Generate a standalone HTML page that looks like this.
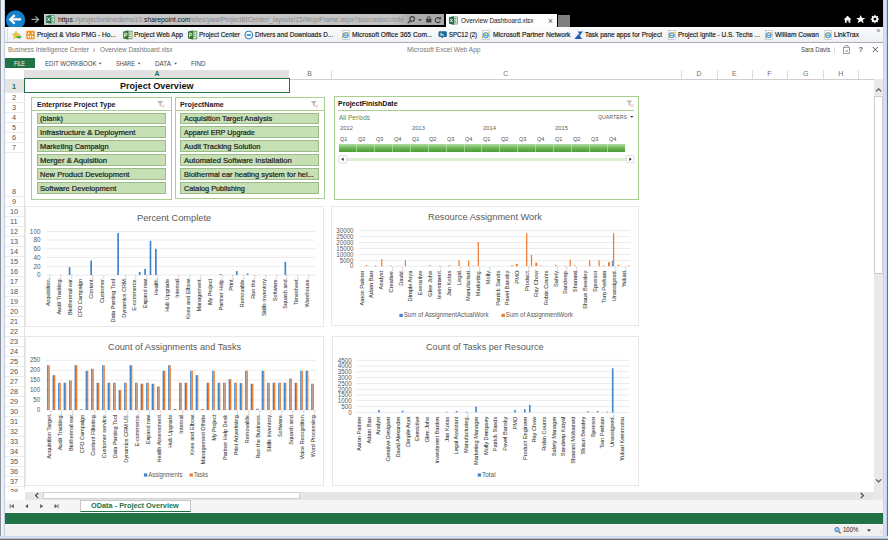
<!DOCTYPE html>
<html lang="en"><head><meta charset="utf-8"><title>Overview Dashboard.xlsx</title>
<style>
html,body{margin:0;padding:0;}
body{width:888px;height:540px;overflow:hidden;position:relative;background:#fff;font-family:"Liberation Sans",sans-serif;}
.b{position:absolute;box-sizing:border-box;}
.t{position:absolute;white-space:nowrap;transform-origin:0 50%;}
svg{position:absolute;left:0;top:0;overflow:visible;}
svg text{font-family:"Liberation Sans",sans-serif;}
</style></head><body>
<div class="b" style="left:0.00px;top:0.00px;width:888.00px;height:540.00px;background:#c9d9ec;"></div>
<div class="b" style="left:0.00px;top:0.00px;width:4.60px;height:540.00px;background:linear-gradient(90deg,#8f9196 0,#8f9196 15%,#eef3fa 22%,#e9eff8 72%,#bfcde2 80%,#bfcde2 100%);"></div>
<div class="b" style="left:883.40px;top:0.00px;width:4.60px;height:540.00px;background:linear-gradient(90deg,#bccbe2 0,#d6e2f3 22%,#d3e0f2 62%,#c0cfe6 72%,#757779 80%,#6e6e6e 100%);"></div>
<div class="b" style="left:0.00px;top:536.00px;width:888.00px;height:4.00px;background:linear-gradient(180deg,#c3d2e8 0,#d6e2f3 25%,#d3e0f2 58%,#9aa3b0 66%,#6e6e6e 74%,#6e6e6e 100%);"></div>
<div class="b" style="left:4.60px;top:0.00px;width:878.80px;height:27.10px;background:#000;"></div>
<svg width="888" height="30" viewBox="0 0 888 30"><circle cx="15.55" cy="19.9" r="9.6" fill="#1581cb"/><path d="M21.1 19.45H10.6M14.7 15.1L10.3 19.45L14.7 23.8" fill="none" stroke="#fff" stroke-width="2.2" stroke-linecap="butt" stroke-linejoin="miter"/><path d="M31.5 19.45H38.3M35.4 16.4L38.5 19.45L35.4 22.5" fill="none" stroke="#a2a2a2" stroke-width="1.3"/></svg>
<div class="b" style="left:44.00px;top:13.90px;width:399.50px;height:11.00px;background:linear-gradient(90deg,#c6c6c6 0,#c2c2c2 88%,#adadad 91%,#a9a9a9 100%);"></div>
<svg width="888" height="540" viewBox="0 0 888 540"><g transform="translate(46.20,15.10) scale(0.840)"><rect x="3.5" y="0.8" width="6.5" height="8.4" fill="#fff" stroke="#2a7a4b" stroke-width="0.7"/><path d="M5.5 2.5H9M5.5 4.2H9M5.5 5.9H9M5.5 7.6H9" stroke="#2a7a4b" stroke-width="0.8"/><path d="M0 1L6 0V10L0 9Z" fill="#1e7145"/><path d="M1.5 3L4.3 7M4.3 3L1.5 7" stroke="#fff" stroke-width="1.1" fill="none"/></g></svg>
<span class="t" style="left:57.60px;top:15.24px;font-size:7.60px;line-height:9.12px;color:#111;transform:scaleX(0.8982);">https</span>
<span class="t" style="left:72.60px;top:15.24px;font-size:7.60px;line-height:9.12px;color:#878787;transform:scaleX(0.8974);">://projectonlinedemo10.</span>
<span class="t" style="left:143.50px;top:15.24px;font-size:7.60px;line-height:9.12px;color:#111;transform:scaleX(0.8949);">sharepoint.com</span>
<span class="t" style="left:190.00px;top:15.24px;font-size:7.60px;line-height:9.12px;color:#8a8a8a;transform:scaleX(0.8642);">/sites/pwa/ProjectBICenter/_layouts/15/WopiFrame.aspx?sourcedoc=/site</span>
<svg width="888" height="30" viewBox="0 0 888 30"><circle cx="412.2" cy="18.9" r="2.3" fill="none" stroke="#3e3e3e" stroke-width="1.1"/><path d="M410.6 20.7L407.8 23" stroke="#3e3e3e" stroke-width="1.3"/><path d="M418 19.2L419.9 21.2L421.8 19.2Z" fill="#3e3e3e"/><rect x="426.2" y="18.9" width="5.2" height="3.6" fill="#3e3e3e"/><path d="M427.4 19.2V18.1A1.4 1.5 0 0 1 430.2 18.1V19.2" fill="none" stroke="#3e3e3e" stroke-width="0.9"/><path d="M439.8 18.6A2.5 2.5 0 1 0 440.2 20.9" fill="none" stroke="#3e3e3e" stroke-width="1.1"/><path d="M441 16.6V19.2H438.4Z" fill="#3e3e3e"/><path d="M843.7 19.6L847.6 15.8L851.5 19.6H850.3V22.8H848.6V20.6H846.6V22.8H844.9V19.6Z" fill="#fff"/><path d="M860.7 14.9L862 18H865.3L862.7 20L863.7 23.2L860.7 21.3L857.7 23.2L858.7 20L856.1 18H859.4Z" fill="#fff"/><circle cx="874.9" cy="19.1" r="2.4" fill="none" stroke="#fff" stroke-width="1.5"/><path d="M874.9 15V23.2M870.8 19.1H879M872 16.2L877.8 22M877.8 16.2L872 22" stroke="#fff" stroke-width="1.2"/><circle cx="874.9" cy="19.1" r="1.35" fill="#000"/></svg>
<div class="b" style="left:446.30px;top:14.00px;width:111.00px;height:14.00px;background:#fdfdfd;"></div>
<svg width="888" height="540" viewBox="0 0 888 540"><g transform="translate(449.00,16.30) scale(0.840)"><rect x="3.5" y="0.8" width="6.5" height="8.4" fill="#fff" stroke="#2a7a4b" stroke-width="0.7"/><path d="M5.5 2.5H9M5.5 4.2H9M5.5 5.9H9M5.5 7.6H9" stroke="#2a7a4b" stroke-width="0.8"/><path d="M0 1L6 0V10L0 9Z" fill="#1e7145"/><path d="M1.5 3L4.3 7M4.3 3L1.5 7" stroke="#fff" stroke-width="1.1" fill="none"/></g></svg>
<span class="t" style="left:460.50px;top:16.82px;font-size:7.30px;line-height:8.76px;color:#222;transform:scaleX(0.8760);">Overview Dashboard.xlsx</span>
<span class="t" style="left:548.00px;top:15.90px;font-size:8.50px;line-height:10.20px;color:#555;">×</span>
<div class="b" style="left:558.30px;top:14.50px;width:11.50px;height:12.50px;background:#808080;"></div>
<div class="b" style="left:4.60px;top:27.10px;width:878.80px;height:15.80px;background:linear-gradient(180deg,#fbfcfd,#eef0f3);border-bottom:1px solid #a9adb3;"></div>
<svg width="888" height="45" viewBox="0 0 888 45"><path d="M7.5 28.6V41" stroke="#9aa0a8" stroke-width="0.7" stroke-dasharray="0.7 0.9"/><path d="M16.1 31.2L17.2 33.7L19.9 34L17.9 35.8L18.5 38.5L16.1 37.1L13.7 38.5L14.3 35.8L12.3 34L15 33.7Z" fill="#f3c53a" stroke="#d2a228" stroke-width="0.5"/><path d="M16.4 36.3H19.3V35.1L21.7 37.1L19.3 39.1V37.9H16.4Z" fill="#3fae3f"/><rect x="26.3" y="30.8" width="8.4" height="8.4" rx="1" fill="#f7941d"/><path d="M28.6 32.6V34.2M32.4 32.6V34.2M28.4 36V37.8M30.5 35.6V37.8M32.6 36V37.8" stroke="#fff" stroke-width="1.2"/></svg>
<span class="t" style="left:37.00px;top:30.62px;font-size:7.30px;line-height:8.76px;color:#111;transform:scaleX(0.8988);-webkit-text-stroke:0.15px #111;">Project &amp; Visio PMG - Ho...</span>
<svg width="888" height="45" viewBox="0 0 888 45"><g transform="translate(123.20,30.6)"><rect x="3" y="0.6" width="5.8" height="7.6" fill="#fff" stroke="#31752f" stroke-width="0.7"/><path d="M4.6 2.4H7.6M4.6 4.2H7.6M4.6 6H7.6" stroke="#31752f" stroke-width="0.8"/><path d="M0 0.9L5.2 0V8.8L0 7.9Z" fill="#31752f"/><path d="M1.6 6.6V2.6H2.8A1.1 1.1 0 0 1 2.8 4.8H1.6" stroke="#fff" stroke-width="0.9" fill="none"/></g></svg>
<span class="t" style="left:134.00px;top:30.62px;font-size:7.30px;line-height:8.76px;color:#111;transform:scaleX(0.9034);-webkit-text-stroke:0.15px #111;">Project Web App</span>
<svg width="888" height="45" viewBox="0 0 888 45"><g transform="translate(188.00,30.6)"><rect x="3" y="0.6" width="5.8" height="7.6" fill="#fff" stroke="#31752f" stroke-width="0.7"/><path d="M4.6 2.4H7.6M4.6 4.2H7.6M4.6 6H7.6" stroke="#31752f" stroke-width="0.8"/><path d="M0 0.9L5.2 0V8.8L0 7.9Z" fill="#31752f"/><path d="M1.6 6.6V2.6H2.8A1.1 1.1 0 0 1 2.8 4.8H1.6" stroke="#fff" stroke-width="0.9" fill="none"/></g></svg>
<span class="t" style="left:199.00px;top:30.62px;font-size:7.30px;line-height:8.76px;color:#111;transform:scaleX(0.8787);-webkit-text-stroke:0.15px #111;">Project Center</span>
<svg width="888" height="45" viewBox="0 0 888 45"><circle cx="248.8" cy="35" r="3.9" fill="#fff" stroke="#1b7ac2" stroke-width="1"/><path d="M246.6 35H251" stroke="#1b7ac2" stroke-width="1.4"/></svg>
<span class="t" style="left:255.00px;top:30.62px;font-size:7.30px;line-height:8.76px;color:#111;transform:scaleX(0.8803);-webkit-text-stroke:0.15px #111;">Drivers and Downloads  D...</span>
<svg width="888" height="45" viewBox="0 0 888 45"><g transform="translate(341.30,30.4)"><rect x="1.2" y="0.3" width="6.8" height="8.6" fill="#fff" stroke="#b8b8b8" stroke-width="0.6"/><circle cx="4.4" cy="4.9" r="2.5" fill="#d8ecfb" stroke="#3a96e0" stroke-width="1.1"/><path d="M2.2 5H6.6" stroke="#3a96e0" stroke-width="0.9"/><path d="M0.8 7.6C1.6 4.6 5.4 1.9 7.8 2.3" stroke="#f0b429" stroke-width="0.9" fill="none"/></g></svg>
<span class="t" style="left:352.00px;top:30.62px;font-size:7.30px;line-height:8.76px;color:#111;transform:scaleX(0.9116);-webkit-text-stroke:0.15px #111;">Microsoft Office 365 Com...</span>
<svg width="888" height="45" viewBox="0 0 888 45"><path d="M439.8 31.2H445.6Q446.9 31.2 446.9 32.5V35.8Q446.9 37.1 445.6 37.1H443.2L441.6 38.7V37.1H439.8Q438.5 37.1 438.5 35.8V32.5Q438.5 31.2 439.8 31.2Z" fill="#1f6a9a"/><path d="M441 32.8V36M441 34.6H443.2V36" stroke="#fff" stroke-width="0.8" fill="none"/></svg>
<span class="t" style="left:449.00px;top:30.62px;font-size:7.30px;line-height:8.76px;color:#111;transform:scaleX(0.8216);-webkit-text-stroke:0.15px #111;">SPC12 (2)</span>
<svg width="888" height="45" viewBox="0 0 888 45"><g transform="translate(481.40,30.4)"><rect x="1.2" y="0.3" width="6.8" height="8.6" fill="#fff" stroke="#b8b8b8" stroke-width="0.6"/><circle cx="4.4" cy="4.9" r="2.5" fill="#d8ecfb" stroke="#3a96e0" stroke-width="1.1"/><path d="M2.2 5H6.6" stroke="#3a96e0" stroke-width="0.9"/><path d="M0.8 7.6C1.6 4.6 5.4 1.9 7.8 2.3" stroke="#f0b429" stroke-width="0.9" fill="none"/></g></svg>
<span class="t" style="left:492.50px;top:30.62px;font-size:7.30px;line-height:8.76px;color:#111;transform:scaleX(0.9185);-webkit-text-stroke:0.15px #111;">Microsoft Partner Network</span>
<svg width="888" height="45" viewBox="0 0 888 45"><path d="M577.4 31.4H583.2L580.2 34.6Z" fill="#1f5fbf"/><path d="M574.4 39H582.2L579.6 35.4H577.2Z" fill="#1f5fbf"/><path d="M580.6 33.4L577.6 36.6" stroke="#1f5fbf" stroke-width="1.6"/></svg>
<span class="t" style="left:585.30px;top:30.62px;font-size:7.30px;line-height:8.76px;color:#111;transform:scaleX(0.8909);-webkit-text-stroke:0.15px #111;">Task pane apps for Project</span>
<svg width="888" height="45" viewBox="0 0 888 45"><g transform="translate(667.30,30.4)"><rect x="1.2" y="0.3" width="6.8" height="8.6" fill="#fff" stroke="#b8b8b8" stroke-width="0.6"/><circle cx="4.4" cy="4.9" r="2.5" fill="#d8ecfb" stroke="#3a96e0" stroke-width="1.1"/><path d="M2.2 5H6.6" stroke="#3a96e0" stroke-width="0.9"/><path d="M0.8 7.6C1.6 4.6 5.4 1.9 7.8 2.3" stroke="#f0b429" stroke-width="0.9" fill="none"/></g></svg>
<span class="t" style="left:678.00px;top:30.62px;font-size:7.30px;line-height:8.76px;color:#111;transform:scaleX(0.8877);-webkit-text-stroke:0.15px #111;">Project Ignite - U.S. Techs ...</span>
<svg width="888" height="45" viewBox="0 0 888 45"><g transform="translate(764.30,30.4)"><rect x="1.2" y="0.3" width="6.8" height="8.6" fill="#fff" stroke="#b8b8b8" stroke-width="0.6"/><circle cx="4.4" cy="4.9" r="2.5" fill="#d8ecfb" stroke="#3a96e0" stroke-width="1.1"/><path d="M2.2 5H6.6" stroke="#3a96e0" stroke-width="0.9"/><path d="M0.8 7.6C1.6 4.6 5.4 1.9 7.8 2.3" stroke="#f0b429" stroke-width="0.9" fill="none"/></g></svg>
<span class="t" style="left:775.00px;top:30.62px;font-size:7.30px;line-height:8.76px;color:#111;transform:scaleX(0.9115);-webkit-text-stroke:0.15px #111;">William Cowan</span>
<svg width="888" height="45" viewBox="0 0 888 45"><g transform="translate(823.60,30.4)"><rect x="1.2" y="0.3" width="6.8" height="8.6" fill="#fff" stroke="#b8b8b8" stroke-width="0.6"/><circle cx="4.4" cy="4.9" r="2.5" fill="#d8ecfb" stroke="#3a96e0" stroke-width="1.1"/><path d="M2.2 5H6.6" stroke="#3a96e0" stroke-width="0.9"/><path d="M0.8 7.6C1.6 4.6 5.4 1.9 7.8 2.3" stroke="#f0b429" stroke-width="0.9" fill="none"/></g></svg>
<span class="t" style="left:834.00px;top:30.62px;font-size:7.30px;line-height:8.76px;color:#111;transform:scaleX(0.9018);-webkit-text-stroke:0.15px #111;">LinkTrax</span>
<span class="t" style="left:876.60px;top:26.70px;font-size:6.50px;line-height:7.80px;color:#4a55a8;">»</span>
<div class="b" style="left:4.60px;top:42.90px;width:878.80px;height:481.40px;background:#fff;"></div>
<span class="t" style="left:8.00px;top:46.34px;font-size:7.10px;line-height:8.52px;color:#747474;transform:scaleX(0.9001);">Business Intelligence Center</span>
<svg width="888" height="60" viewBox="0 0 888 60"><path d="M93 48.4L95 50.2L93 52" fill="none" stroke="#888" stroke-width="0.8"/></svg>
<span class="t" style="left:99.50px;top:46.34px;font-size:7.10px;line-height:8.52px;color:#747474;transform:scaleX(0.9007);">Overview Dashboard.xlsx</span>
<span class="t" style="left:407.40px;top:46.34px;font-size:7.10px;line-height:8.52px;color:#777;transform:scaleX(0.9341);">Microsoft Excel Web App</span>
<span class="t" style="left:800.60px;top:46.34px;font-size:7.10px;line-height:8.52px;color:#444;transform:scaleX(0.8467);">Sara Davis</span>
<div class="b" style="left:834.10px;top:46.60px;width:0.80px;height:6.40px;background:#d6d6d6;"></div>
<svg width="888" height="60" viewBox="0 0 888 60"><rect x="843.5" y="47.4" width="6" height="6" fill="none" stroke="#8a8a8a" stroke-width="0.8"/><rect x="845" y="45.6" width="3" height="2" fill="#fff" stroke="#8a8a8a" stroke-width="0.7"/><path d="M845.2 50.7L846.3 51.9L848 49.7" stroke="#2a9a5a" stroke-width="0.8" fill="none"/><path d="M872.8 47L877.8 52M877.8 47L872.8 52" stroke="#555" stroke-width="1"/></svg>
<span class="t" style="left:858.50px;top:45.24px;font-size:7.60px;line-height:9.12px;color:#666;font-weight:bold;">?</span>
<div class="b" style="left:4.50px;top:57.60px;width:30.40px;height:10.80px;background:#217346;"></div>
<span class="t" style="left:14.00px;top:59.52px;font-size:6.80px;line-height:8.16px;color:#fff;transform:scaleX(0.7660);">FILE</span>
<span class="t" style="left:44.50px;top:59.52px;font-size:6.80px;line-height:8.16px;color:#444;transform:scaleX(0.8870);">EDIT WORKBOOK</span>
<span class="t" style="left:116.00px;top:59.52px;font-size:6.80px;line-height:8.16px;color:#444;transform:scaleX(0.8110);">SHARE</span>
<span class="t" style="left:155.00px;top:59.52px;font-size:6.80px;line-height:8.16px;color:#444;transform:scaleX(0.9342);">DATA</span>
<span class="t" style="left:191.00px;top:59.52px;font-size:6.80px;line-height:8.16px;color:#444;transform:scaleX(0.9140);">FIND</span>
<svg width="888" height="80" viewBox="0 0 888 80"><path d="M98.6 62.8H101.6L100.1 64.6ZM137.6 62.8H140.6L139.1 64.6ZM174.1 62.8H177.1L175.6 64.6Z" fill="#555"/></svg>
<div class="b" style="left:24.30px;top:70.10px;width:264.70px;height:8.40px;background:#e1e1e1;"></div>
<div class="b" style="left:4.60px;top:78.60px;width:869.40px;height:0.80px;background:#cfcfcf;"></div>
<div class="b" style="left:331.00px;top:70.20px;width:0.70px;height:8.40px;background:#dcdcdc;"></div>
<div class="b" style="left:681.30px;top:70.20px;width:0.70px;height:8.40px;background:#dcdcdc;"></div>
<div class="b" style="left:716.80px;top:70.20px;width:0.70px;height:8.40px;background:#dcdcdc;"></div>
<div class="b" style="left:752.30px;top:70.20px;width:0.70px;height:8.40px;background:#dcdcdc;"></div>
<div class="b" style="left:787.40px;top:70.20px;width:0.70px;height:8.40px;background:#dcdcdc;"></div>
<div class="b" style="left:822.70px;top:70.20px;width:0.70px;height:8.40px;background:#dcdcdc;"></div>
<div class="b" style="left:858.40px;top:70.20px;width:0.70px;height:8.40px;background:#dcdcdc;"></div>
<span class="t" style="left:154.50px;top:70.30px;font-size:7.00px;line-height:8.40px;color:#217346;font-weight:bold;">A</span>
<span class="t" style="left:307.20px;top:70.30px;font-size:7.00px;line-height:8.40px;color:#707070;">B</span>
<span class="t" style="left:503.20px;top:70.30px;font-size:7.00px;line-height:8.40px;color:#707070;">C</span>
<span class="t" style="left:696.50px;top:70.30px;font-size:7.00px;line-height:8.40px;color:#707070;">D</span>
<span class="t" style="left:731.90px;top:70.30px;font-size:7.00px;line-height:8.40px;color:#707070;">E</span>
<span class="t" style="left:767.30px;top:70.30px;font-size:7.00px;line-height:8.40px;color:#707070;">F</span>
<span class="t" style="left:802.90px;top:70.30px;font-size:7.00px;line-height:8.40px;color:#707070;">G</span>
<span class="t" style="left:838.30px;top:70.30px;font-size:7.00px;line-height:8.40px;color:#707070;">H</span>
<div class="b" style="left:24.00px;top:79.00px;width:0.70px;height:410.00px;background:#e2e2e2;"></div>
<div class="b" style="left:4.60px;top:79.20px;width:19.50px;height:12.80px;background:#e4e4e4;"></div>
<span class="t" style="left:12.17px;top:82.43px;font-size:7.70px;line-height:9.24px;color:#217346;font-weight:bold;transform:scaleX(0.9500);">1</span>
<span class="t" style="left:12.17px;top:93.28px;font-size:7.70px;line-height:9.24px;color:#555;transform:scaleX(0.9500);">2</span>
<span class="t" style="left:12.17px;top:103.28px;font-size:7.70px;line-height:9.24px;color:#555;transform:scaleX(0.9500);">3</span>
<span class="t" style="left:12.17px;top:113.28px;font-size:7.70px;line-height:9.24px;color:#555;transform:scaleX(0.9500);">4</span>
<span class="t" style="left:12.17px;top:123.28px;font-size:7.70px;line-height:9.24px;color:#555;transform:scaleX(0.9500);">5</span>
<span class="t" style="left:12.17px;top:133.28px;font-size:7.70px;line-height:9.24px;color:#555;transform:scaleX(0.9500);">6</span>
<span class="t" style="left:12.17px;top:143.28px;font-size:7.70px;line-height:9.24px;color:#555;transform:scaleX(0.9500);">7</span>
<span class="t" style="left:12.17px;top:187.18px;font-size:7.70px;line-height:9.24px;color:#555;transform:scaleX(0.9500);">8</span>
<span class="t" style="left:12.17px;top:197.28px;font-size:7.70px;line-height:9.24px;color:#555;transform:scaleX(0.9500);">9</span>
<span class="t" style="left:10.13px;top:207.28px;font-size:7.70px;line-height:9.24px;color:#555;transform:scaleX(0.9500);">10</span>
<span class="t" style="left:10.40px;top:217.28px;font-size:7.70px;line-height:9.24px;color:#555;transform:scaleX(0.9500);">11</span>
<span class="t" style="left:10.13px;top:227.28px;font-size:7.70px;line-height:9.24px;color:#555;transform:scaleX(0.9500);">12</span>
<span class="t" style="left:10.13px;top:237.28px;font-size:7.70px;line-height:9.24px;color:#555;transform:scaleX(0.9500);">13</span>
<span class="t" style="left:10.13px;top:247.28px;font-size:7.70px;line-height:9.24px;color:#555;transform:scaleX(0.9500);">14</span>
<span class="t" style="left:10.13px;top:257.28px;font-size:7.70px;line-height:9.24px;color:#555;transform:scaleX(0.9500);">15</span>
<span class="t" style="left:10.13px;top:267.28px;font-size:7.70px;line-height:9.24px;color:#555;transform:scaleX(0.9500);">16</span>
<span class="t" style="left:10.13px;top:277.28px;font-size:7.70px;line-height:9.24px;color:#555;transform:scaleX(0.9500);">17</span>
<span class="t" style="left:10.13px;top:287.28px;font-size:7.70px;line-height:9.24px;color:#555;transform:scaleX(0.9500);">18</span>
<span class="t" style="left:10.13px;top:297.28px;font-size:7.70px;line-height:9.24px;color:#555;transform:scaleX(0.9500);">19</span>
<span class="t" style="left:10.13px;top:307.28px;font-size:7.70px;line-height:9.24px;color:#555;transform:scaleX(0.9500);">20</span>
<span class="t" style="left:10.13px;top:317.28px;font-size:7.70px;line-height:9.24px;color:#555;transform:scaleX(0.9500);">21</span>
<span class="t" style="left:10.13px;top:327.28px;font-size:7.70px;line-height:9.24px;color:#555;transform:scaleX(0.9500);">22</span>
<span class="t" style="left:10.13px;top:337.28px;font-size:7.70px;line-height:9.24px;color:#555;transform:scaleX(0.9500);">23</span>
<span class="t" style="left:10.13px;top:347.28px;font-size:7.70px;line-height:9.24px;color:#555;transform:scaleX(0.9500);">24</span>
<span class="t" style="left:10.13px;top:357.28px;font-size:7.70px;line-height:9.24px;color:#555;transform:scaleX(0.9500);">25</span>
<span class="t" style="left:10.13px;top:367.28px;font-size:7.70px;line-height:9.24px;color:#555;transform:scaleX(0.9500);">26</span>
<span class="t" style="left:10.13px;top:377.28px;font-size:7.70px;line-height:9.24px;color:#555;transform:scaleX(0.9500);">27</span>
<span class="t" style="left:10.13px;top:387.28px;font-size:7.70px;line-height:9.24px;color:#555;transform:scaleX(0.9500);">28</span>
<span class="t" style="left:10.13px;top:397.28px;font-size:7.70px;line-height:9.24px;color:#555;transform:scaleX(0.9500);">29</span>
<span class="t" style="left:10.13px;top:407.28px;font-size:7.70px;line-height:9.24px;color:#555;transform:scaleX(0.9500);">30</span>
<span class="t" style="left:10.13px;top:417.28px;font-size:7.70px;line-height:9.24px;color:#555;transform:scaleX(0.9500);">31</span>
<span class="t" style="left:10.13px;top:427.28px;font-size:7.70px;line-height:9.24px;color:#555;transform:scaleX(0.9500);">32</span>
<span class="t" style="left:10.13px;top:437.28px;font-size:7.70px;line-height:9.24px;color:#555;transform:scaleX(0.9500);">33</span>
<span class="t" style="left:10.13px;top:447.28px;font-size:7.70px;line-height:9.24px;color:#555;transform:scaleX(0.9500);">34</span>
<span class="t" style="left:10.13px;top:457.28px;font-size:7.70px;line-height:9.24px;color:#555;transform:scaleX(0.9500);">35</span>
<span class="t" style="left:10.13px;top:467.28px;font-size:7.70px;line-height:9.24px;color:#555;transform:scaleX(0.9500);">36</span>
<span class="t" style="left:10.13px;top:477.28px;font-size:7.70px;line-height:9.24px;color:#555;transform:scaleX(0.9500);">37</span>
<div class="b" style="left:4.60px;top:92.30px;width:19.50px;height:0.70px;background:#ebebeb;"></div>
<div class="b" style="left:4.60px;top:102.00px;width:19.50px;height:0.70px;background:#ebebeb;"></div>
<div class="b" style="left:4.60px;top:112.00px;width:19.50px;height:0.70px;background:#ebebeb;"></div>
<div class="b" style="left:4.60px;top:122.00px;width:19.50px;height:0.70px;background:#ebebeb;"></div>
<div class="b" style="left:4.60px;top:132.00px;width:19.50px;height:0.70px;background:#ebebeb;"></div>
<div class="b" style="left:4.60px;top:142.00px;width:19.50px;height:0.70px;background:#ebebeb;"></div>
<div class="b" style="left:4.60px;top:152.00px;width:19.50px;height:0.70px;background:#ebebeb;"></div>
<div class="b" style="left:4.60px;top:196.20px;width:19.50px;height:0.70px;background:#ebebeb;"></div>
<div class="b" style="left:4.60px;top:206.21px;width:19.50px;height:0.70px;background:#ebebeb;"></div>
<div class="b" style="left:4.60px;top:216.22px;width:19.50px;height:0.70px;background:#ebebeb;"></div>
<div class="b" style="left:4.60px;top:226.23px;width:19.50px;height:0.70px;background:#ebebeb;"></div>
<div class="b" style="left:4.60px;top:236.24px;width:19.50px;height:0.70px;background:#ebebeb;"></div>
<div class="b" style="left:4.60px;top:246.25px;width:19.50px;height:0.70px;background:#ebebeb;"></div>
<div class="b" style="left:4.60px;top:256.26px;width:19.50px;height:0.70px;background:#ebebeb;"></div>
<div class="b" style="left:4.60px;top:266.27px;width:19.50px;height:0.70px;background:#ebebeb;"></div>
<div class="b" style="left:4.60px;top:276.28px;width:19.50px;height:0.70px;background:#ebebeb;"></div>
<div class="b" style="left:4.60px;top:286.29px;width:19.50px;height:0.70px;background:#ebebeb;"></div>
<div class="b" style="left:4.60px;top:296.30px;width:19.50px;height:0.70px;background:#ebebeb;"></div>
<div class="b" style="left:4.60px;top:306.31px;width:19.50px;height:0.70px;background:#ebebeb;"></div>
<div class="b" style="left:4.60px;top:316.32px;width:19.50px;height:0.70px;background:#ebebeb;"></div>
<div class="b" style="left:4.60px;top:326.33px;width:19.50px;height:0.70px;background:#ebebeb;"></div>
<div class="b" style="left:4.60px;top:336.34px;width:19.50px;height:0.70px;background:#ebebeb;"></div>
<div class="b" style="left:4.60px;top:346.35px;width:19.50px;height:0.70px;background:#ebebeb;"></div>
<div class="b" style="left:4.60px;top:356.36px;width:19.50px;height:0.70px;background:#ebebeb;"></div>
<div class="b" style="left:4.60px;top:366.37px;width:19.50px;height:0.70px;background:#ebebeb;"></div>
<div class="b" style="left:4.60px;top:376.38px;width:19.50px;height:0.70px;background:#ebebeb;"></div>
<div class="b" style="left:4.60px;top:386.39px;width:19.50px;height:0.70px;background:#ebebeb;"></div>
<div class="b" style="left:4.60px;top:396.40px;width:19.50px;height:0.70px;background:#ebebeb;"></div>
<div class="b" style="left:4.60px;top:406.41px;width:19.50px;height:0.70px;background:#ebebeb;"></div>
<div class="b" style="left:4.60px;top:416.42px;width:19.50px;height:0.70px;background:#ebebeb;"></div>
<div class="b" style="left:4.60px;top:426.43px;width:19.50px;height:0.70px;background:#ebebeb;"></div>
<div class="b" style="left:4.60px;top:436.44px;width:19.50px;height:0.70px;background:#ebebeb;"></div>
<div class="b" style="left:4.60px;top:446.45px;width:19.50px;height:0.70px;background:#ebebeb;"></div>
<div class="b" style="left:4.60px;top:456.46px;width:19.50px;height:0.70px;background:#ebebeb;"></div>
<div class="b" style="left:4.60px;top:466.47px;width:19.50px;height:0.70px;background:#ebebeb;"></div>
<div class="b" style="left:4.60px;top:476.48px;width:19.50px;height:0.70px;background:#ebebeb;"></div>
<div class="b" style="left:4.60px;top:486.49px;width:19.50px;height:0.70px;background:#ebebeb;"></div>
<span class="t" style="left:10.10px;top:486.78px;font-size:7.70px;line-height:9.24px;color:#555;transform:scaleX(0.9574);clip-path:inset(0 0 47% 0);">38</span>
<div class="b" style="left:24.05px;top:78.05px;width:265.60px;height:14.60px;border:1.6px solid #217346;background:#fff;"></div>
<span class="t" style="left:120.00px;top:80.72px;font-size:9.30px;line-height:11.16px;color:#111;font-weight:bold;transform:scaleX(0.9739);">Project Overview</span>
<div class="b" style="left:30.90px;top:96.80px;width:141.10px;height:103.10px;border:1.2px solid #a9cf8f;background:#fff;"></div>
<span class="t" style="left:36.50px;top:100.66px;font-size:7.40px;line-height:8.88px;color:#151a2a;font-weight:bold;transform:scaleX(0.9512);">Enterprise Project Type</span>
<div class="b" style="left:31.90px;top:109.80px;width:139.10px;height:1.10px;background:#a9cf8f;"></div>
<svg width="888" height="540" viewBox="0 0 888 540"><g transform="translate(157.10,101.10)"><path d="M0 0H6.2L3.8 2.6V5.4L2.5 4.6V2.6Z" fill="#b9b9b9"/><path d="M4.4 3.6L7 6.4M7 3.6L4.4 6.4" stroke="#f29a9a" stroke-width="0.7"/></g></svg>
<div class="b" style="left:36.50px;top:112.50px;width:129.20px;height:11.90px;background:#c6dfb5;border:0.9px solid #9cb98a;"></div>
<span class="t" style="left:40.30px;top:115.14px;font-size:7.10px;line-height:8.52px;color:#1c1c1c;transform:scaleX(1.0551);-webkit-text-stroke:0.2px #1c1c1c;">(blank)</span>
<div class="b" style="left:36.50px;top:126.46px;width:129.20px;height:11.90px;background:#c6dfb5;border:0.9px solid #9cb98a;"></div>
<span class="t" style="left:40.30px;top:129.10px;font-size:7.10px;line-height:8.52px;color:#1c1c1c;transform:scaleX(1.0804);-webkit-text-stroke:0.2px #1c1c1c;">Infrastructure &amp; Deployment</span>
<div class="b" style="left:36.50px;top:140.42px;width:129.20px;height:11.90px;background:#c6dfb5;border:0.9px solid #9cb98a;"></div>
<span class="t" style="left:40.30px;top:143.06px;font-size:7.10px;line-height:8.52px;color:#1c1c1c;transform:scaleX(1.0487);-webkit-text-stroke:0.2px #1c1c1c;">Marketing Campaign</span>
<div class="b" style="left:36.50px;top:154.38px;width:129.20px;height:11.90px;background:#c6dfb5;border:0.9px solid #9cb98a;"></div>
<span class="t" style="left:40.30px;top:157.02px;font-size:7.10px;line-height:8.52px;color:#1c1c1c;transform:scaleX(1.0899);-webkit-text-stroke:0.2px #1c1c1c;">Merger &amp; Aquisition</span>
<div class="b" style="left:36.50px;top:168.34px;width:129.20px;height:11.90px;background:#c6dfb5;border:0.9px solid #9cb98a;"></div>
<span class="t" style="left:40.30px;top:170.98px;font-size:7.10px;line-height:8.52px;color:#1c1c1c;transform:scaleX(1.0598);-webkit-text-stroke:0.2px #1c1c1c;">New Product Development</span>
<div class="b" style="left:36.50px;top:182.30px;width:129.20px;height:11.90px;background:#c6dfb5;border:0.9px solid #9cb98a;"></div>
<span class="t" style="left:40.30px;top:184.94px;font-size:7.10px;line-height:8.52px;color:#1c1c1c;transform:scaleX(1.0623);-webkit-text-stroke:0.2px #1c1c1c;">Software Development</span>
<div class="b" style="left:174.60px;top:96.80px;width:150.90px;height:102.20px;border:1.2px solid #a9cf8f;background:#fff;"></div>
<span class="t" style="left:180.20px;top:100.66px;font-size:7.40px;line-height:8.88px;color:#151a2a;font-weight:bold;transform:scaleX(0.9681);">ProjectName</span>
<div class="b" style="left:175.60px;top:109.80px;width:148.90px;height:1.10px;background:#a9cf8f;"></div>
<svg width="888" height="540" viewBox="0 0 888 540"><g transform="translate(310.60,101.10)"><path d="M0 0H6.2L3.8 2.6V5.4L2.5 4.6V2.6Z" fill="#b9b9b9"/><path d="M4.4 3.6L7 6.4M7 3.6L4.4 6.4" stroke="#f29a9a" stroke-width="0.7"/></g></svg>
<div class="b" style="left:180.20px;top:112.50px;width:139.00px;height:11.90px;background:#c6dfb5;border:0.9px solid #9cb98a;"></div>
<span class="t" style="left:184.00px;top:115.14px;font-size:7.10px;line-height:8.52px;color:#1c1c1c;transform:scaleX(1.0508);-webkit-text-stroke:0.2px #1c1c1c;">Acquisition Target Analysis</span>
<div class="b" style="left:180.20px;top:126.46px;width:139.00px;height:11.90px;background:#c6dfb5;border:0.9px solid #9cb98a;"></div>
<span class="t" style="left:184.00px;top:129.10px;font-size:7.10px;line-height:8.52px;color:#1c1c1c;transform:scaleX(1.0096);-webkit-text-stroke:0.2px #1c1c1c;">Apparel ERP Upgrade</span>
<div class="b" style="left:180.20px;top:140.42px;width:139.00px;height:11.90px;background:#c6dfb5;border:0.9px solid #9cb98a;"></div>
<span class="t" style="left:184.00px;top:143.06px;font-size:7.10px;line-height:8.52px;color:#1c1c1c;transform:scaleX(1.0548);-webkit-text-stroke:0.2px #1c1c1c;">Audit Tracking Solution</span>
<div class="b" style="left:180.20px;top:154.38px;width:139.00px;height:11.90px;background:#c6dfb5;border:0.9px solid #9cb98a;"></div>
<span class="t" style="left:184.00px;top:157.02px;font-size:7.10px;line-height:8.52px;color:#1c1c1c;transform:scaleX(1.0753);-webkit-text-stroke:0.2px #1c1c1c;">Automated Software Installation</span>
<div class="b" style="left:180.20px;top:168.34px;width:139.00px;height:11.90px;background:#c6dfb5;border:0.9px solid #9cb98a;"></div>
<span class="t" style="left:184.00px;top:170.98px;font-size:7.10px;line-height:8.52px;color:#1c1c1c;transform:scaleX(1.0525);-webkit-text-stroke:0.2px #1c1c1c;">Biothermal ear heating system for hel...</span>
<div class="b" style="left:180.20px;top:182.30px;width:139.00px;height:11.90px;background:#c6dfb5;border:0.9px solid #9cb98a;"></div>
<span class="t" style="left:184.00px;top:184.94px;font-size:7.10px;line-height:8.52px;color:#1c1c1c;transform:scaleX(1.0269);-webkit-text-stroke:0.2px #1c1c1c;">Catalog Publishing</span>
<div class="b" style="left:333.50px;top:96.30px;width:305.70px;height:103.40px;border:1.2px solid #a9cf8f;background:#fff;"></div>
<span class="t" style="left:338.40px;top:99.86px;font-size:7.40px;line-height:8.88px;color:#111;font-weight:bold;transform:scaleX(0.9473);">ProjectFinishDate</span>
<div class="b" style="left:338.00px;top:110.10px;width:296.00px;height:1.00px;background:#a9cf8f;"></div>
<svg width="888" height="540" viewBox="0 0 888 540"><g transform="translate(626.20,100.50)"><path d="M0 0H6.2L3.8 2.6V5.4L2.5 4.6V2.6Z" fill="#b9b9b9"/><path d="M4.4 3.6L7 6.4M7 3.6L4.4 6.4" stroke="#f29a9a" stroke-width="0.7"/></g></svg>
<span class="t" style="left:338.70px;top:113.58px;font-size:6.70px;line-height:8.04px;color:#5c8c42;transform:scaleX(0.9711);">All Periods</span>
<span class="t" style="left:598.00px;top:113.66px;font-size:5.90px;line-height:7.08px;color:#5a5a5a;transform:scaleX(0.8875);">QUARTERS</span>
<svg width="888" height="540" viewBox="0 0 888 540"><path d="M629.9 115.9H633.7L631.8 117.8Z" fill="#444"/></svg>
<span class="t" style="left:339.80px;top:124.08px;font-size:6.20px;line-height:7.44px;color:#606060;transform:scaleX(0.9425);">2012</span>
<span class="t" style="left:339.80px;top:134.64px;font-size:6.10px;line-height:7.32px;color:#505050;transform:scaleX(0.9094);">Q1</span>
<span class="t" style="left:357.72px;top:134.64px;font-size:6.10px;line-height:7.32px;color:#505050;transform:scaleX(0.9094);">Q2</span>
<span class="t" style="left:375.64px;top:134.64px;font-size:6.10px;line-height:7.32px;color:#505050;transform:scaleX(0.9094);">Q3</span>
<span class="t" style="left:393.56px;top:134.64px;font-size:6.10px;line-height:7.32px;color:#505050;transform:scaleX(0.9094);">Q4</span>
<span class="t" style="left:411.50px;top:124.08px;font-size:6.20px;line-height:7.44px;color:#606060;transform:scaleX(0.9425);">2013</span>
<span class="t" style="left:411.50px;top:134.64px;font-size:6.10px;line-height:7.32px;color:#505050;transform:scaleX(0.9094);">Q1</span>
<span class="t" style="left:429.42px;top:134.64px;font-size:6.10px;line-height:7.32px;color:#505050;transform:scaleX(0.9094);">Q2</span>
<span class="t" style="left:447.34px;top:134.64px;font-size:6.10px;line-height:7.32px;color:#505050;transform:scaleX(0.9094);">Q3</span>
<span class="t" style="left:465.26px;top:134.64px;font-size:6.10px;line-height:7.32px;color:#505050;transform:scaleX(0.9094);">Q4</span>
<span class="t" style="left:483.20px;top:124.08px;font-size:6.20px;line-height:7.44px;color:#606060;transform:scaleX(0.9425);">2014</span>
<span class="t" style="left:483.20px;top:134.64px;font-size:6.10px;line-height:7.32px;color:#505050;transform:scaleX(0.9094);">Q1</span>
<span class="t" style="left:501.12px;top:134.64px;font-size:6.10px;line-height:7.32px;color:#505050;transform:scaleX(0.9094);">Q2</span>
<span class="t" style="left:519.04px;top:134.64px;font-size:6.10px;line-height:7.32px;color:#505050;transform:scaleX(0.9094);">Q3</span>
<span class="t" style="left:536.96px;top:134.64px;font-size:6.10px;line-height:7.32px;color:#505050;transform:scaleX(0.9094);">Q4</span>
<span class="t" style="left:554.90px;top:124.08px;font-size:6.20px;line-height:7.44px;color:#606060;transform:scaleX(0.9425);">2015</span>
<span class="t" style="left:554.90px;top:134.64px;font-size:6.10px;line-height:7.32px;color:#505050;transform:scaleX(0.9094);">Q1</span>
<span class="t" style="left:572.82px;top:134.64px;font-size:6.10px;line-height:7.32px;color:#505050;transform:scaleX(0.9094);">Q2</span>
<span class="t" style="left:590.74px;top:134.64px;font-size:6.10px;line-height:7.32px;color:#505050;transform:scaleX(0.9094);">Q3</span>
<span class="t" style="left:608.66px;top:134.64px;font-size:6.10px;line-height:7.32px;color:#505050;transform:scaleX(0.9094);">Q4</span>
<div class="b" style="left:338.60px;top:144.20px;width:286.50px;height:7.70px;background:linear-gradient(180deg,#b4dca5 0,#8cc97a 25%,#66b04f 60%,#4b9b36 100%);"></div>
<div class="b" style="left:356.11px;top:144.20px;width:0.80px;height:7.70px;background:rgba(200,235,190,0.55);"></div>
<div class="b" style="left:374.01px;top:144.20px;width:0.80px;height:7.70px;background:rgba(200,235,190,0.55);"></div>
<div class="b" style="left:391.92px;top:144.20px;width:0.80px;height:7.70px;background:rgba(200,235,190,0.55);"></div>
<div class="b" style="left:409.82px;top:144.20px;width:0.80px;height:7.70px;background:rgba(200,235,190,0.55);"></div>
<div class="b" style="left:427.73px;top:144.20px;width:0.80px;height:7.70px;background:rgba(200,235,190,0.55);"></div>
<div class="b" style="left:445.63px;top:144.20px;width:0.80px;height:7.70px;background:rgba(200,235,190,0.55);"></div>
<div class="b" style="left:463.54px;top:144.20px;width:0.80px;height:7.70px;background:rgba(200,235,190,0.55);"></div>
<div class="b" style="left:481.44px;top:144.20px;width:0.80px;height:7.70px;background:rgba(200,235,190,0.55);"></div>
<div class="b" style="left:499.35px;top:144.20px;width:0.80px;height:7.70px;background:rgba(200,235,190,0.55);"></div>
<div class="b" style="left:517.25px;top:144.20px;width:0.80px;height:7.70px;background:rgba(200,235,190,0.55);"></div>
<div class="b" style="left:535.16px;top:144.20px;width:0.80px;height:7.70px;background:rgba(200,235,190,0.55);"></div>
<div class="b" style="left:553.06px;top:144.20px;width:0.80px;height:7.70px;background:rgba(200,235,190,0.55);"></div>
<div class="b" style="left:570.97px;top:144.20px;width:0.80px;height:7.70px;background:rgba(200,235,190,0.55);"></div>
<div class="b" style="left:588.87px;top:144.20px;width:0.80px;height:7.70px;background:rgba(200,235,190,0.55);"></div>
<div class="b" style="left:606.78px;top:144.20px;width:0.80px;height:7.70px;background:rgba(200,235,190,0.55);"></div>
<div class="b" style="left:346.50px;top:157.60px;width:280.00px;height:3.30px;background:#dcefd4;"></div>
<svg width="888" height="540" viewBox="0 0 888 540"><rect x="338.9" y="155.5" width="7.6" height="7.4" rx="1" fill="#fff" stroke="#cfcfcf" stroke-width="0.7"/><path d="M343.6 157.5V161L341.3 159.25Z" fill="#222"/><rect x="626.5" y="155.5" width="7.4" height="7.4" rx="1" fill="#fff" stroke="#cfcfcf" stroke-width="0.7"/><path d="M629.3 157.5V161L631.6 159.25Z" fill="#222"/></svg>
<div class="b" style="left:25.00px;top:206.00px;width:299.00px;height:121.00px;border:1px solid #e8e8e8;background:#fff;"></div>
<span class="t" style="left:136.80px;top:212.62px;font-size:9.30px;line-height:11.16px;color:#595959;transform:scaleX(0.9968);">Percent Complete</span>
<svg width="888" height="540" viewBox="0 0 888 540"><rect x="46.20" y="274.65" width="268.80" height="0.7" fill="#e3e3e3"/><rect x="46.20" y="265.91" width="268.80" height="0.7" fill="#e3e3e3"/><rect x="46.20" y="257.17" width="268.80" height="0.7" fill="#e3e3e3"/><rect x="46.20" y="248.43" width="268.80" height="0.7" fill="#e3e3e3"/><rect x="46.20" y="239.69" width="268.80" height="0.7" fill="#e3e3e3"/><rect x="46.20" y="230.95" width="268.80" height="0.7" fill="#e3e3e3"/><text x="40.50" y="277.34" font-size="6.50" fill="#595959" text-anchor="end" textLength="3.54" lengthAdjust="spacingAndGlyphs">0</text><text x="40.50" y="268.60" font-size="6.50" fill="#595959" text-anchor="end" textLength="7.09" lengthAdjust="spacingAndGlyphs">20</text><text x="40.50" y="259.86" font-size="6.50" fill="#595959" text-anchor="end" textLength="7.09" lengthAdjust="spacingAndGlyphs">40</text><text x="40.50" y="251.12" font-size="6.50" fill="#595959" text-anchor="end" textLength="7.09" lengthAdjust="spacingAndGlyphs">60</text><text x="40.50" y="242.38" font-size="6.50" fill="#595959" text-anchor="end" textLength="7.09" lengthAdjust="spacingAndGlyphs">80</text><text x="40.50" y="233.64" font-size="6.50" fill="#595959" text-anchor="end" textLength="10.63" lengthAdjust="spacingAndGlyphs">100</text><rect x="68.72" y="267.13" width="1.70" height="7.87" fill="#4185cd"/><rect x="90.30" y="260.58" width="1.70" height="14.42" fill="#4185cd"/><rect x="117.27" y="233.05" width="1.70" height="41.95" fill="#4185cd"/><rect x="138.84" y="271.94" width="1.70" height="3.06" fill="#4185cd"/><rect x="144.24" y="268.88" width="1.70" height="6.12" fill="#4185cd"/><rect x="149.63" y="240.91" width="1.70" height="34.09" fill="#4185cd"/><rect x="155.03" y="248.78" width="1.70" height="26.22" fill="#4185cd"/><rect x="219.76" y="273.91" width="1.70" height="1.09" fill="#4185cd"/><rect x="235.94" y="271.07" width="1.70" height="3.93" fill="#4185cd"/><rect x="246.72" y="273.47" width="1.70" height="1.53" fill="#4185cd"/><rect x="284.48" y="261.89" width="1.70" height="13.11" fill="#4185cd"/><text transform="translate(50.04,274.80) rotate(-90)" font-size="6.00" fill="#454545" stroke="#454545" stroke-width="0.07" text-anchor="end" textLength="31.30" lengthAdjust="spacingAndGlyphs">Acquisition...</text><text transform="translate(60.82,274.80) rotate(-90)" font-size="6.00" fill="#454545" stroke="#454545" stroke-width="0.07" text-anchor="end" textLength="39.58" lengthAdjust="spacingAndGlyphs">Audit Tracking...</text><text transform="translate(71.61,274.80) rotate(-90)" font-size="6.00" fill="#454545" stroke="#454545" stroke-width="0.07" text-anchor="end" textLength="40.19" lengthAdjust="spacingAndGlyphs">Biothermal ear...</text><text transform="translate(82.40,279.00) rotate(-90)" font-size="6.00" fill="#454545" stroke="#454545" stroke-width="0.07" text-anchor="end" textLength="38.35" lengthAdjust="spacingAndGlyphs">CFO Campaign</text><text transform="translate(93.19,274.80) rotate(-90)" font-size="6.00" fill="#454545" stroke="#454545" stroke-width="0.07" text-anchor="end" textLength="23.93" lengthAdjust="spacingAndGlyphs">Content...</text><text transform="translate(103.98,274.80) rotate(-90)" font-size="6.00" fill="#454545" stroke="#454545" stroke-width="0.07" text-anchor="end" textLength="28.22" lengthAdjust="spacingAndGlyphs">Customer...</text><text transform="translate(114.77,279.00) rotate(-90)" font-size="6.00" fill="#454545" stroke="#454545" stroke-width="0.07" text-anchor="end" textLength="43.47" lengthAdjust="spacingAndGlyphs">Data Parsing Tool</text><text transform="translate(125.55,274.80) rotate(-90)" font-size="6.00" fill="#454545" stroke="#454545" stroke-width="0.07" text-anchor="end" textLength="42.94" lengthAdjust="spacingAndGlyphs">Dynamics CRM...</text><text transform="translate(136.34,274.80) rotate(-90)" font-size="6.00" fill="#454545" stroke="#454545" stroke-width="0.07" text-anchor="end" textLength="35.89" lengthAdjust="spacingAndGlyphs">E-commerce...</text><text transform="translate(147.13,274.80) rotate(-90)" font-size="6.00" fill="#454545" stroke="#454545" stroke-width="0.07" text-anchor="end" textLength="33.45" lengthAdjust="spacingAndGlyphs">Expand raw...</text><text transform="translate(157.92,274.80) rotate(-90)" font-size="6.00" fill="#454545" stroke="#454545" stroke-width="0.07" text-anchor="end" textLength="20.56" lengthAdjust="spacingAndGlyphs">Health...</text><text transform="translate(168.71,279.00) rotate(-90)" font-size="6.00" fill="#454545" stroke="#454545" stroke-width="0.07" text-anchor="end" textLength="32.84" lengthAdjust="spacingAndGlyphs">Hub Upgrade</text><text transform="translate(179.49,274.80) rotate(-90)" font-size="6.00" fill="#454545" stroke="#454545" stroke-width="0.07" text-anchor="end" textLength="23.01" lengthAdjust="spacingAndGlyphs">Internal...</text><text transform="translate(190.28,274.80) rotate(-90)" font-size="6.00" fill="#454545" stroke="#454545" stroke-width="0.07" text-anchor="end" textLength="44.50" lengthAdjust="spacingAndGlyphs">Knee and Elbow...</text><text transform="translate(201.07,274.80) rotate(-90)" font-size="6.00" fill="#454545" stroke="#454545" stroke-width="0.07" text-anchor="end" textLength="36.82" lengthAdjust="spacingAndGlyphs">Management...</text><text transform="translate(211.86,279.00) rotate(-90)" font-size="6.00" fill="#454545" stroke="#454545" stroke-width="0.07" text-anchor="end" textLength="26.07" lengthAdjust="spacingAndGlyphs">My Project</text><text transform="translate(222.65,274.80) rotate(-90)" font-size="6.00" fill="#454545" stroke="#454545" stroke-width="0.07" text-anchor="end" textLength="35.59" lengthAdjust="spacingAndGlyphs">Partner Help...</text><text transform="translate(233.43,274.80) rotate(-90)" font-size="6.00" fill="#454545" stroke="#454545" stroke-width="0.07" text-anchor="end" textLength="15.95" lengthAdjust="spacingAndGlyphs">Print...</text><text transform="translate(244.22,274.80) rotate(-90)" font-size="6.00" fill="#454545" stroke="#454545" stroke-width="0.07" text-anchor="end" textLength="32.52" lengthAdjust="spacingAndGlyphs">Removable...</text><text transform="translate(255.01,274.80) rotate(-90)" font-size="6.00" fill="#454545" stroke="#454545" stroke-width="0.07" text-anchor="end" textLength="23.93" lengthAdjust="spacingAndGlyphs">Run the...</text><text transform="translate(265.80,274.80) rotate(-90)" font-size="6.00" fill="#454545" stroke="#454545" stroke-width="0.07" text-anchor="end" textLength="41.31" lengthAdjust="spacingAndGlyphs">Skills Inventory...</text><text transform="translate(276.59,274.80) rotate(-90)" font-size="6.00" fill="#454545" stroke="#454545" stroke-width="0.07" text-anchor="end" textLength="26.38" lengthAdjust="spacingAndGlyphs">Software...</text><text transform="translate(287.37,274.80) rotate(-90)" font-size="6.00" fill="#454545" stroke="#454545" stroke-width="0.07" text-anchor="end" textLength="34.07" lengthAdjust="spacingAndGlyphs">Squash and...</text><text transform="translate(298.16,274.80) rotate(-90)" font-size="6.00" fill="#454545" stroke="#454545" stroke-width="0.07" text-anchor="end" textLength="30.17" lengthAdjust="spacingAndGlyphs">Timesheet...</text><text transform="translate(308.95,274.80) rotate(-90)" font-size="6.00" fill="#454545" stroke="#454545" stroke-width="0.07" text-anchor="end" textLength="32.62" lengthAdjust="spacingAndGlyphs">Warehouse...</text></svg>
<div class="b" style="left:331.00px;top:206.00px;width:308.00px;height:120.00px;border:1px solid #e8e8e8;background:#fff;"></div>
<span class="t" style="left:428.00px;top:212.32px;font-size:9.30px;line-height:11.16px;color:#595959;transform:scaleX(0.9950);">Resource Assignment Work</span>
<svg width="888" height="540" viewBox="0 0 888 540"><rect x="359.40" y="265.85" width="271.00" height="0.7" fill="#e3e3e3"/><rect x="359.40" y="259.95" width="271.00" height="0.7" fill="#e3e3e3"/><rect x="359.40" y="254.05" width="271.00" height="0.7" fill="#e3e3e3"/><rect x="359.40" y="248.15" width="271.00" height="0.7" fill="#e3e3e3"/><rect x="359.40" y="242.25" width="271.00" height="0.7" fill="#e3e3e3"/><rect x="359.40" y="236.35" width="271.00" height="0.7" fill="#e3e3e3"/><rect x="359.40" y="230.45" width="271.00" height="0.7" fill="#e3e3e3"/><text x="353.50" y="268.47" font-size="6.30" fill="#595959" text-anchor="end" textLength="3.43" lengthAdjust="spacingAndGlyphs">0</text><text x="353.50" y="262.57" font-size="6.30" fill="#595959" text-anchor="end" textLength="13.74" lengthAdjust="spacingAndGlyphs">5000</text><text x="353.50" y="256.67" font-size="6.30" fill="#595959" text-anchor="end" textLength="17.17" lengthAdjust="spacingAndGlyphs">10000</text><text x="353.50" y="250.77" font-size="6.30" fill="#595959" text-anchor="end" textLength="17.17" lengthAdjust="spacingAndGlyphs">15000</text><text x="353.50" y="244.87" font-size="6.30" fill="#595959" text-anchor="end" textLength="17.17" lengthAdjust="spacingAndGlyphs">20000</text><text x="353.50" y="238.97" font-size="6.30" fill="#595959" text-anchor="end" textLength="17.17" lengthAdjust="spacingAndGlyphs">25000</text><text x="353.50" y="233.07" font-size="6.30" fill="#595959" text-anchor="end" textLength="17.17" lengthAdjust="spacingAndGlyphs">30000</text><rect x="365.98" y="265.02" width="1.25" height="1.18" fill="#ed7d31"/><rect x="381.18" y="259.12" width="1.25" height="7.08" fill="#ed7d31"/><rect x="390.57" y="265.61" width="1.25" height="0.59" fill="#ed7d31"/><rect x="404.77" y="260.30" width="1.25" height="5.90" fill="#ed7d31"/><rect x="429.27" y="265.14" width="1.25" height="1.06" fill="#ed7d31"/><rect x="439.18" y="265.61" width="1.25" height="0.59" fill="#ed7d31"/><rect x="448.57" y="265.14" width="1.25" height="1.06" fill="#ed7d31"/><rect x="458.38" y="260.30" width="1.25" height="5.90" fill="#ed7d31"/><rect x="467.98" y="260.65" width="1.25" height="5.55" fill="#ed7d31"/><rect x="472.88" y="265.49" width="1.25" height="0.71" fill="#ed7d31"/><rect x="477.68" y="242.01" width="1.25" height="24.19" fill="#ed7d31"/><rect x="511.38" y="265.14" width="1.25" height="1.06" fill="#ed7d31"/><rect x="515.85" y="263.84" width="1.90" height="2.36" fill="#ed7d31"/><rect x="526.08" y="233.16" width="1.25" height="33.04" fill="#ed7d31"/><rect x="530.88" y="254.99" width="1.25" height="11.21" fill="#ed7d31"/><rect x="535.35" y="262.66" width="1.90" height="3.54" fill="#ed7d31"/><rect x="540.48" y="265.61" width="1.25" height="0.59" fill="#ed7d31"/><rect x="555.17" y="264.67" width="1.25" height="1.53" fill="#ed7d31"/><rect x="564.77" y="265.61" width="1.25" height="0.59" fill="#ed7d31"/><rect x="569.58" y="259.71" width="1.25" height="6.49" fill="#ed7d31"/><rect x="574.38" y="265.49" width="1.25" height="0.71" fill="#ed7d31"/><rect x="589.08" y="260.30" width="1.25" height="5.90" fill="#ed7d31"/><rect x="598.48" y="260.30" width="1.25" height="5.90" fill="#ed7d31"/><rect x="603.27" y="265.49" width="1.25" height="0.71" fill="#ed7d31"/><rect x="608.05" y="262.07" width="1.90" height="4.13" fill="#ed7d31"/><rect x="612.98" y="233.16" width="1.25" height="33.04" fill="#ed7d31"/><rect x="617.77" y="264.67" width="1.25" height="1.53" fill="#ed7d31"/><rect x="627.88" y="265.49" width="1.25" height="0.71" fill="#ed7d31"/><rect x="375.10" y="265.37" width="1.00" height="0.83" fill="#4185cd"/><rect x="611.80" y="260.89" width="1.00" height="5.31" fill="#4185cd"/><text transform="translate(363.74,270.70) rotate(-90)" font-size="6.00" fill="#454545" stroke="#454545" stroke-width="0.07" text-anchor="end" textLength="34.86" lengthAdjust="spacingAndGlyphs">Aaron Painter</text><text transform="translate(373.44,270.70) rotate(-90)" font-size="6.00" fill="#454545" stroke="#454545" stroke-width="0.07" text-anchor="end" textLength="27.24" lengthAdjust="spacingAndGlyphs">Adam Barr</text><text transform="translate(383.14,270.70) rotate(-90)" font-size="6.00" fill="#454545" stroke="#454545" stroke-width="0.07" text-anchor="end" textLength="18.69" lengthAdjust="spacingAndGlyphs">Analyst</text><text transform="translate(392.84,266.50) rotate(-90)" font-size="6.00" fill="#454545" stroke="#454545" stroke-width="0.07" text-anchor="end" textLength="25.98" lengthAdjust="spacingAndGlyphs">Creative...</text><text transform="translate(402.54,266.50) rotate(-90)" font-size="6.00" fill="#454545" stroke="#454545" stroke-width="0.07" text-anchor="end" textLength="19.32" lengthAdjust="spacingAndGlyphs">David...</text><text transform="translate(412.24,270.70) rotate(-90)" font-size="6.00" fill="#454545" stroke="#454545" stroke-width="0.07" text-anchor="end" textLength="30.73" lengthAdjust="spacingAndGlyphs">Dimple Arya</text><text transform="translate(421.94,270.70) rotate(-90)" font-size="6.00" fill="#454545" stroke="#454545" stroke-width="0.07" text-anchor="end" textLength="24.71" lengthAdjust="spacingAndGlyphs">Executive</text><text transform="translate(431.64,270.70) rotate(-90)" font-size="6.00" fill="#454545" stroke="#454545" stroke-width="0.07" text-anchor="end" textLength="25.98" lengthAdjust="spacingAndGlyphs">Glen John</text><text transform="translate(441.34,266.50) rotate(-90)" font-size="6.00" fill="#454545" stroke="#454545" stroke-width="0.07" text-anchor="end" textLength="32.63" lengthAdjust="spacingAndGlyphs">Investment...</text><text transform="translate(451.04,270.70) rotate(-90)" font-size="6.00" fill="#454545" stroke="#454545" stroke-width="0.07" text-anchor="end" textLength="25.35" lengthAdjust="spacingAndGlyphs">Jan Kotas</text><text transform="translate(460.74,266.50) rotate(-90)" font-size="6.00" fill="#454545" stroke="#454545" stroke-width="0.07" text-anchor="end" textLength="18.70" lengthAdjust="spacingAndGlyphs">Legal...</text><text transform="translate(470.44,266.50) rotate(-90)" font-size="6.00" fill="#454545" stroke="#454545" stroke-width="0.07" text-anchor="end" textLength="34.53" lengthAdjust="spacingAndGlyphs">Manufacturi...</text><text transform="translate(480.14,266.50) rotate(-90)" font-size="6.00" fill="#454545" stroke="#454545" stroke-width="0.07" text-anchor="end" textLength="29.78" lengthAdjust="spacingAndGlyphs">Marketing...</text><text transform="translate(489.84,266.50) rotate(-90)" font-size="6.00" fill="#454545" stroke="#454545" stroke-width="0.07" text-anchor="end" textLength="17.63" lengthAdjust="spacingAndGlyphs">Molly...</text><text transform="translate(499.54,270.70) rotate(-90)" font-size="6.00" fill="#454545" stroke="#454545" stroke-width="0.07" text-anchor="end" textLength="35.17" lengthAdjust="spacingAndGlyphs">Patrick Sands</text><text transform="translate(509.24,270.70) rotate(-90)" font-size="6.00" fill="#454545" stroke="#454545" stroke-width="0.07" text-anchor="end" textLength="34.53" lengthAdjust="spacingAndGlyphs">Pavel Bansky</text><text transform="translate(518.94,270.70) rotate(-90)" font-size="6.00" fill="#454545" stroke="#454545" stroke-width="0.07" text-anchor="end" textLength="12.98" lengthAdjust="spacingAndGlyphs">PMO</text><text transform="translate(528.64,266.50) rotate(-90)" font-size="6.00" fill="#454545" stroke="#454545" stroke-width="0.07" text-anchor="end" textLength="24.40" lengthAdjust="spacingAndGlyphs">Product...</text><text transform="translate(538.34,270.70) rotate(-90)" font-size="6.00" fill="#454545" stroke="#454545" stroke-width="0.07" text-anchor="end" textLength="26.29" lengthAdjust="spacingAndGlyphs">Ray Chow</text><text transform="translate(548.04,270.70) rotate(-90)" font-size="6.00" fill="#454545" stroke="#454545" stroke-width="0.07" text-anchor="end" textLength="34.54" lengthAdjust="spacingAndGlyphs">Robin Counts</text><text transform="translate(557.74,266.50) rotate(-90)" font-size="6.00" fill="#454545" stroke="#454545" stroke-width="0.07" text-anchor="end" textLength="20.49" lengthAdjust="spacingAndGlyphs">Safety...</text><text transform="translate(567.44,266.50) rotate(-90)" font-size="6.00" fill="#454545" stroke="#454545" stroke-width="0.07" text-anchor="end" textLength="27.57" lengthAdjust="spacingAndGlyphs">Sandeep...</text><text transform="translate(577.14,266.50) rotate(-90)" font-size="6.00" fill="#454545" stroke="#454545" stroke-width="0.07" text-anchor="end" textLength="25.66" lengthAdjust="spacingAndGlyphs">Shammi...</text><text transform="translate(586.84,270.70) rotate(-90)" font-size="6.00" fill="#454545" stroke="#454545" stroke-width="0.07" text-anchor="end" textLength="38.35" lengthAdjust="spacingAndGlyphs">Shaun Beasley</text><text transform="translate(596.54,270.70) rotate(-90)" font-size="6.00" fill="#454545" stroke="#454545" stroke-width="0.07" text-anchor="end" textLength="21.23" lengthAdjust="spacingAndGlyphs">Sponsor</text><text transform="translate(606.24,270.70) rotate(-90)" font-size="6.00" fill="#454545" stroke="#454545" stroke-width="0.07" text-anchor="end" textLength="32.31" lengthAdjust="spacingAndGlyphs">Tom Perham</text><text transform="translate(615.94,266.50) rotate(-90)" font-size="6.00" fill="#454545" stroke="#454545" stroke-width="0.07" text-anchor="end" textLength="34.85" lengthAdjust="spacingAndGlyphs">Unassigned...</text><text transform="translate(625.64,266.50) rotate(-90)" font-size="6.00" fill="#454545" stroke="#454545" stroke-width="0.07" text-anchor="end" textLength="20.59" lengthAdjust="spacingAndGlyphs">Yukari...</text><rect x="399.40" y="313.80" width="3.4" height="3.2" fill="#4185cd"/><text x="403.70" y="317.30" font-size="6.40" fill="#595959" textLength="84.80" lengthAdjust="spacingAndGlyphs">Sum of AssignmentActualWork</text><rect x="501.50" y="313.80" width="3.4" height="3.2" fill="#ed7d31"/><text x="505.80" y="317.30" font-size="6.40" fill="#595959" textLength="67.00" lengthAdjust="spacingAndGlyphs">Sum of AssignmentWork</text></svg>
<div class="b" style="left:25.00px;top:336.00px;width:299.00px;height:150.00px;border:1px solid #e8e8e8;background:#fff;"></div>
<span class="t" style="left:107.80px;top:341.72px;font-size:9.30px;line-height:11.16px;color:#595959;transform:scaleX(0.9884);">Count of Assignments and Tasks</span>
<svg width="888" height="540" viewBox="0 0 888 540"><rect x="46.00" y="409.65" width="269.60" height="0.7" fill="#e3e3e3"/><rect x="46.00" y="399.69" width="269.60" height="0.7" fill="#e3e3e3"/><rect x="46.00" y="389.73" width="269.60" height="0.7" fill="#e3e3e3"/><rect x="46.00" y="379.77" width="269.60" height="0.7" fill="#e3e3e3"/><rect x="46.00" y="369.81" width="269.60" height="0.7" fill="#e3e3e3"/><rect x="46.00" y="359.85" width="269.60" height="0.7" fill="#e3e3e3"/><text x="40.20" y="412.27" font-size="6.30" fill="#595959" text-anchor="end" textLength="3.43" lengthAdjust="spacingAndGlyphs">0</text><text x="40.20" y="402.31" font-size="6.30" fill="#595959" text-anchor="end" textLength="6.87" lengthAdjust="spacingAndGlyphs">50</text><text x="40.20" y="392.35" font-size="6.30" fill="#595959" text-anchor="end" textLength="10.30" lengthAdjust="spacingAndGlyphs">100</text><text x="40.20" y="382.39" font-size="6.30" fill="#595959" text-anchor="end" textLength="10.30" lengthAdjust="spacingAndGlyphs">150</text><text x="40.20" y="372.43" font-size="6.30" fill="#595959" text-anchor="end" textLength="10.30" lengthAdjust="spacingAndGlyphs">200</text><text x="40.20" y="362.47" font-size="6.30" fill="#595959" text-anchor="end" textLength="10.30" lengthAdjust="spacingAndGlyphs">250</text><rect x="47.10" y="365.18" width="1.35" height="44.82" fill="#4185cd"/><rect x="48.45" y="365.18" width="1.35" height="44.82" fill="#ed7d31"/><rect x="52.60" y="375.14" width="1.35" height="34.86" fill="#4185cd"/><rect x="53.95" y="375.14" width="1.35" height="34.86" fill="#ed7d31"/><rect x="58.11" y="382.71" width="1.35" height="27.29" fill="#4185cd"/><rect x="59.46" y="382.71" width="1.35" height="27.29" fill="#ed7d31"/><rect x="63.61" y="382.71" width="1.35" height="27.29" fill="#4185cd"/><rect x="64.96" y="382.71" width="1.35" height="27.29" fill="#ed7d31"/><rect x="69.11" y="380.52" width="1.35" height="29.48" fill="#4185cd"/><rect x="70.46" y="380.52" width="1.35" height="29.48" fill="#ed7d31"/><rect x="74.61" y="365.18" width="1.35" height="44.82" fill="#4185cd"/><rect x="75.96" y="365.18" width="1.35" height="44.82" fill="#ed7d31"/><rect x="80.11" y="409.40" width="1.35" height="0.60" fill="#4185cd"/><rect x="81.46" y="409.40" width="1.35" height="0.60" fill="#ed7d31"/><rect x="85.62" y="370.76" width="1.35" height="39.24" fill="#4185cd"/><rect x="86.97" y="370.76" width="1.35" height="39.24" fill="#ed7d31"/><rect x="91.12" y="368.77" width="1.35" height="41.23" fill="#4185cd"/><rect x="92.47" y="368.77" width="1.35" height="41.23" fill="#ed7d31"/><rect x="96.62" y="382.71" width="1.35" height="27.29" fill="#4185cd"/><rect x="97.97" y="382.71" width="1.35" height="27.29" fill="#ed7d31"/><rect x="102.12" y="365.18" width="1.35" height="44.82" fill="#4185cd"/><rect x="103.47" y="365.18" width="1.35" height="44.82" fill="#ed7d31"/><rect x="107.62" y="382.71" width="1.35" height="27.29" fill="#4185cd"/><rect x="108.97" y="382.71" width="1.35" height="27.29" fill="#ed7d31"/><rect x="113.13" y="382.71" width="1.35" height="27.29" fill="#4185cd"/><rect x="114.48" y="382.71" width="1.35" height="27.29" fill="#ed7d31"/><rect x="118.63" y="390.08" width="1.35" height="19.92" fill="#4185cd"/><rect x="119.98" y="390.08" width="1.35" height="19.92" fill="#ed7d31"/><rect x="124.13" y="382.71" width="1.35" height="27.29" fill="#4185cd"/><rect x="125.48" y="382.71" width="1.35" height="27.29" fill="#ed7d31"/><rect x="129.63" y="365.18" width="1.35" height="44.82" fill="#4185cd"/><rect x="130.98" y="365.18" width="1.35" height="44.82" fill="#ed7d31"/><rect x="135.13" y="382.71" width="1.35" height="27.29" fill="#4185cd"/><rect x="136.48" y="382.71" width="1.35" height="27.29" fill="#ed7d31"/><rect x="140.64" y="383.71" width="1.35" height="26.29" fill="#4185cd"/><rect x="141.99" y="383.71" width="1.35" height="26.29" fill="#ed7d31"/><rect x="146.14" y="382.71" width="1.35" height="27.29" fill="#4185cd"/><rect x="147.49" y="382.71" width="1.35" height="27.29" fill="#ed7d31"/><rect x="151.64" y="383.71" width="1.35" height="26.29" fill="#4185cd"/><rect x="152.99" y="383.71" width="1.35" height="26.29" fill="#ed7d31"/><rect x="157.14" y="386.49" width="1.35" height="23.51" fill="#4185cd"/><rect x="158.49" y="386.49" width="1.35" height="23.51" fill="#ed7d31"/><rect x="162.64" y="370.76" width="1.35" height="39.24" fill="#4185cd"/><rect x="163.99" y="370.76" width="1.35" height="39.24" fill="#ed7d31"/><rect x="168.15" y="365.18" width="1.35" height="44.82" fill="#4185cd"/><rect x="169.50" y="365.18" width="1.35" height="44.82" fill="#ed7d31"/><rect x="173.65" y="409.00" width="1.35" height="1.00" fill="#4185cd"/><rect x="175.00" y="409.00" width="1.35" height="1.00" fill="#ed7d31"/><rect x="179.15" y="382.71" width="1.35" height="27.29" fill="#4185cd"/><rect x="180.50" y="382.71" width="1.35" height="27.29" fill="#ed7d31"/><rect x="184.65" y="382.71" width="1.35" height="27.29" fill="#4185cd"/><rect x="186.00" y="382.71" width="1.35" height="27.29" fill="#ed7d31"/><rect x="190.15" y="370.76" width="1.35" height="39.24" fill="#4185cd"/><rect x="191.50" y="370.76" width="1.35" height="39.24" fill="#ed7d31"/><rect x="195.66" y="375.14" width="1.35" height="34.86" fill="#4185cd"/><rect x="197.01" y="375.14" width="1.35" height="34.86" fill="#ed7d31"/><rect x="201.16" y="409.00" width="1.35" height="1.00" fill="#4185cd"/><rect x="202.51" y="409.00" width="1.35" height="1.00" fill="#ed7d31"/><rect x="206.66" y="382.71" width="1.35" height="27.29" fill="#4185cd"/><rect x="208.01" y="382.71" width="1.35" height="27.29" fill="#ed7d31"/><rect x="212.16" y="370.76" width="1.35" height="39.24" fill="#4185cd"/><rect x="213.51" y="370.76" width="1.35" height="39.24" fill="#ed7d31"/><rect x="217.66" y="382.71" width="1.35" height="27.29" fill="#4185cd"/><rect x="219.01" y="382.71" width="1.35" height="27.29" fill="#ed7d31"/><rect x="223.17" y="382.71" width="1.35" height="27.29" fill="#4185cd"/><rect x="224.52" y="382.71" width="1.35" height="27.29" fill="#ed7d31"/><rect x="228.67" y="379.12" width="1.35" height="30.88" fill="#4185cd"/><rect x="230.02" y="379.12" width="1.35" height="30.88" fill="#ed7d31"/><rect x="234.17" y="382.71" width="1.35" height="27.29" fill="#4185cd"/><rect x="235.52" y="382.71" width="1.35" height="27.29" fill="#ed7d31"/><rect x="239.67" y="383.11" width="1.35" height="26.89" fill="#4185cd"/><rect x="241.02" y="383.11" width="1.35" height="26.89" fill="#ed7d31"/><rect x="245.17" y="370.76" width="1.35" height="39.24" fill="#4185cd"/><rect x="246.52" y="370.76" width="1.35" height="39.24" fill="#ed7d31"/><rect x="250.68" y="383.71" width="1.35" height="26.29" fill="#4185cd"/><rect x="252.03" y="383.71" width="1.35" height="26.29" fill="#ed7d31"/><rect x="256.18" y="408.80" width="1.35" height="1.20" fill="#4185cd"/><rect x="257.53" y="408.80" width="1.35" height="1.20" fill="#ed7d31"/><rect x="261.68" y="370.76" width="1.35" height="39.24" fill="#4185cd"/><rect x="263.03" y="370.76" width="1.35" height="39.24" fill="#ed7d31"/><rect x="267.18" y="382.71" width="1.35" height="27.29" fill="#4185cd"/><rect x="268.53" y="382.71" width="1.35" height="27.29" fill="#ed7d31"/><rect x="272.68" y="382.71" width="1.35" height="27.29" fill="#4185cd"/><rect x="274.03" y="382.71" width="1.35" height="27.29" fill="#ed7d31"/><rect x="278.19" y="382.71" width="1.35" height="27.29" fill="#4185cd"/><rect x="279.54" y="382.71" width="1.35" height="27.29" fill="#ed7d31"/><rect x="283.69" y="382.71" width="1.35" height="27.29" fill="#4185cd"/><rect x="285.04" y="382.71" width="1.35" height="27.29" fill="#ed7d31"/><rect x="289.19" y="378.53" width="1.35" height="31.47" fill="#4185cd"/><rect x="290.54" y="378.53" width="1.35" height="31.47" fill="#ed7d31"/><rect x="294.69" y="382.71" width="1.35" height="27.29" fill="#4185cd"/><rect x="296.04" y="382.71" width="1.35" height="27.29" fill="#ed7d31"/><rect x="300.19" y="370.76" width="1.35" height="39.24" fill="#4185cd"/><rect x="301.54" y="370.76" width="1.35" height="39.24" fill="#ed7d31"/><rect x="305.70" y="370.76" width="1.35" height="39.24" fill="#4185cd"/><rect x="307.05" y="370.76" width="1.35" height="39.24" fill="#ed7d31"/><rect x="311.20" y="383.71" width="1.35" height="26.29" fill="#4185cd"/><rect x="312.55" y="383.71" width="1.35" height="26.29" fill="#ed7d31"/><text transform="translate(50.79,410.70) rotate(-90)" font-size="6.00" fill="#454545" stroke="#454545" stroke-width="0.07" text-anchor="end" textLength="48.07" lengthAdjust="spacingAndGlyphs">Acquisition Target...</text><text transform="translate(61.80,410.70) rotate(-90)" font-size="6.00" fill="#454545" stroke="#454545" stroke-width="0.07" text-anchor="end" textLength="39.58" lengthAdjust="spacingAndGlyphs">Audit Tracking...</text><text transform="translate(72.80,410.70) rotate(-90)" font-size="6.00" fill="#454545" stroke="#454545" stroke-width="0.07" text-anchor="end" textLength="40.19" lengthAdjust="spacingAndGlyphs">Biothermal ear...</text><text transform="translate(83.80,414.80) rotate(-90)" font-size="6.00" fill="#454545" stroke="#454545" stroke-width="0.07" text-anchor="end" textLength="38.35" lengthAdjust="spacingAndGlyphs">CFO Campaign</text><text transform="translate(94.81,410.70) rotate(-90)" font-size="6.00" fill="#454545" stroke="#454545" stroke-width="0.07" text-anchor="end" textLength="45.10" lengthAdjust="spacingAndGlyphs">Content Filtering...</text><text transform="translate(105.81,410.70) rotate(-90)" font-size="6.00" fill="#454545" stroke="#454545" stroke-width="0.07" text-anchor="end" textLength="47.55" lengthAdjust="spacingAndGlyphs">Customer service...</text><text transform="translate(116.82,414.80) rotate(-90)" font-size="6.00" fill="#454545" stroke="#454545" stroke-width="0.07" text-anchor="end" textLength="43.47" lengthAdjust="spacingAndGlyphs">Data Parsing Tool</text><text transform="translate(127.82,410.70) rotate(-90)" font-size="6.00" fill="#454545" stroke="#454545" stroke-width="0.07" text-anchor="end" textLength="52.14" lengthAdjust="spacingAndGlyphs">Dynamics CRM US...</text><text transform="translate(138.82,410.70) rotate(-90)" font-size="6.00" fill="#454545" stroke="#454545" stroke-width="0.07" text-anchor="end" textLength="35.89" lengthAdjust="spacingAndGlyphs">E-commerce...</text><text transform="translate(149.83,410.70) rotate(-90)" font-size="6.00" fill="#454545" stroke="#454545" stroke-width="0.07" text-anchor="end" textLength="33.45" lengthAdjust="spacingAndGlyphs">Expand raw...</text><text transform="translate(160.83,410.70) rotate(-90)" font-size="6.00" fill="#454545" stroke="#454545" stroke-width="0.07" text-anchor="end" textLength="51.85" lengthAdjust="spacingAndGlyphs">Health Assessment...</text><text transform="translate(171.84,414.80) rotate(-90)" font-size="6.00" fill="#454545" stroke="#454545" stroke-width="0.07" text-anchor="end" textLength="32.84" lengthAdjust="spacingAndGlyphs">Hub Upgrade</text><text transform="translate(182.84,410.70) rotate(-90)" font-size="6.00" fill="#454545" stroke="#454545" stroke-width="0.07" text-anchor="end" textLength="23.01" lengthAdjust="spacingAndGlyphs">Internal...</text><text transform="translate(193.84,410.70) rotate(-90)" font-size="6.00" fill="#454545" stroke="#454545" stroke-width="0.07" text-anchor="end" textLength="44.50" lengthAdjust="spacingAndGlyphs">Knee and Elbow...</text><text transform="translate(204.85,414.80) rotate(-90)" font-size="6.00" fill="#454545" stroke="#454545" stroke-width="0.07" text-anchor="end" textLength="49.61" lengthAdjust="spacingAndGlyphs">Management Offsite</text><text transform="translate(215.85,414.80) rotate(-90)" font-size="6.00" fill="#454545" stroke="#454545" stroke-width="0.07" text-anchor="end" textLength="26.07" lengthAdjust="spacingAndGlyphs">My Project</text><text transform="translate(226.86,414.80) rotate(-90)" font-size="6.00" fill="#454545" stroke="#454545" stroke-width="0.07" text-anchor="end" textLength="45.10" lengthAdjust="spacingAndGlyphs">Partner Help Desk</text><text transform="translate(237.86,410.70) rotate(-90)" font-size="6.00" fill="#454545" stroke="#454545" stroke-width="0.07" text-anchor="end" textLength="44.49" lengthAdjust="spacingAndGlyphs">Print Advertising...</text><text transform="translate(248.86,410.70) rotate(-90)" font-size="6.00" fill="#454545" stroke="#454545" stroke-width="0.07" text-anchor="end" textLength="32.52" lengthAdjust="spacingAndGlyphs">Removable...</text><text transform="translate(259.87,410.70) rotate(-90)" font-size="6.00" fill="#454545" stroke="#454545" stroke-width="0.07" text-anchor="end" textLength="47.87" lengthAdjust="spacingAndGlyphs">Run the Business...</text><text transform="translate(270.87,410.70) rotate(-90)" font-size="6.00" fill="#454545" stroke="#454545" stroke-width="0.07" text-anchor="end" textLength="41.31" lengthAdjust="spacingAndGlyphs">Skills Inventory...</text><text transform="translate(281.88,410.70) rotate(-90)" font-size="6.00" fill="#454545" stroke="#454545" stroke-width="0.07" text-anchor="end" textLength="26.38" lengthAdjust="spacingAndGlyphs">Software...</text><text transform="translate(292.88,410.70) rotate(-90)" font-size="6.00" fill="#454545" stroke="#454545" stroke-width="0.07" text-anchor="end" textLength="34.07" lengthAdjust="spacingAndGlyphs">Squash and...</text><text transform="translate(303.88,410.70) rotate(-90)" font-size="6.00" fill="#454545" stroke="#454545" stroke-width="0.07" text-anchor="end" textLength="48.79" lengthAdjust="spacingAndGlyphs">Voice Recognition...</text><text transform="translate(314.89,410.70) rotate(-90)" font-size="6.00" fill="#454545" stroke="#454545" stroke-width="0.07" text-anchor="end" textLength="46.53" lengthAdjust="spacingAndGlyphs">Word Processing...</text><rect x="143.90" y="473.40" width="3.4" height="3.2" fill="#4185cd"/><text x="148.20" y="476.90" font-size="6.40" fill="#595959" textLength="34.20" lengthAdjust="spacingAndGlyphs">Assignments</text><rect x="189.50" y="473.40" width="3.4" height="3.2" fill="#ed7d31"/><text x="193.80" y="476.90" font-size="6.40" fill="#595959" textLength="14.40" lengthAdjust="spacingAndGlyphs">Tasks</text></svg>
<div class="b" style="left:332.00px;top:336.00px;width:307.00px;height:150.00px;border:1px solid #e8e8e8;background:#fff;"></div>
<span class="t" style="left:426.40px;top:341.82px;font-size:9.30px;line-height:11.16px;color:#595959;transform:scaleX(0.9820);">Count of Tasks per Resource</span>
<svg width="888" height="540" viewBox="0 0 888 540"><rect x="356.40" y="412.05" width="273.20" height="0.7" fill="#e3e3e3"/><rect x="356.40" y="406.25" width="273.20" height="0.7" fill="#e3e3e3"/><rect x="356.40" y="400.45" width="273.20" height="0.7" fill="#e3e3e3"/><rect x="356.40" y="394.65" width="273.20" height="0.7" fill="#e3e3e3"/><rect x="356.40" y="388.85" width="273.20" height="0.7" fill="#e3e3e3"/><rect x="356.40" y="383.05" width="273.20" height="0.7" fill="#e3e3e3"/><rect x="356.40" y="377.25" width="273.20" height="0.7" fill="#e3e3e3"/><rect x="356.40" y="371.45" width="273.20" height="0.7" fill="#e3e3e3"/><rect x="356.40" y="365.65" width="273.20" height="0.7" fill="#e3e3e3"/><rect x="356.40" y="359.85" width="273.20" height="0.7" fill="#e3e3e3"/><text x="351.70" y="414.70" font-size="6.40" fill="#595959" text-anchor="end" textLength="3.49" lengthAdjust="spacingAndGlyphs">0</text><text x="351.70" y="408.90" font-size="6.40" fill="#595959" text-anchor="end" textLength="10.46" lengthAdjust="spacingAndGlyphs">500</text><text x="351.70" y="403.10" font-size="6.40" fill="#595959" text-anchor="end" textLength="13.95" lengthAdjust="spacingAndGlyphs">1000</text><text x="351.70" y="397.30" font-size="6.40" fill="#595959" text-anchor="end" textLength="13.95" lengthAdjust="spacingAndGlyphs">1500</text><text x="351.70" y="391.50" font-size="6.40" fill="#595959" text-anchor="end" textLength="13.95" lengthAdjust="spacingAndGlyphs">2000</text><text x="351.70" y="385.70" font-size="6.40" fill="#595959" text-anchor="end" textLength="13.95" lengthAdjust="spacingAndGlyphs">2500</text><text x="351.70" y="379.90" font-size="6.40" fill="#595959" text-anchor="end" textLength="13.95" lengthAdjust="spacingAndGlyphs">3000</text><text x="351.70" y="374.10" font-size="6.40" fill="#595959" text-anchor="end" textLength="13.95" lengthAdjust="spacingAndGlyphs">3500</text><text x="351.70" y="368.30" font-size="6.40" fill="#595959" text-anchor="end" textLength="13.95" lengthAdjust="spacingAndGlyphs">4000</text><text x="351.70" y="362.50" font-size="6.40" fill="#595959" text-anchor="end" textLength="13.95" lengthAdjust="spacingAndGlyphs">4500</text><rect x="378.10" y="410.08" width="1.60" height="2.32" fill="#4185cd"/><rect x="401.80" y="410.66" width="1.60" height="1.74" fill="#4185cd"/><rect x="446.20" y="411.82" width="1.60" height="0.58" fill="#4185cd"/><rect x="455.80" y="411.01" width="1.60" height="1.39" fill="#4185cd"/><rect x="465.80" y="411.70" width="1.60" height="0.70" fill="#4185cd"/><rect x="475.30" y="406.60" width="1.60" height="5.80" fill="#4185cd"/><rect x="514.20" y="410.08" width="1.60" height="2.32" fill="#4185cd"/><rect x="523.90" y="409.15" width="1.60" height="3.25" fill="#4185cd"/><rect x="529.00" y="404.86" width="1.60" height="7.54" fill="#4185cd"/><rect x="587.30" y="411.24" width="1.60" height="1.16" fill="#4185cd"/><rect x="596.80" y="410.89" width="1.60" height="1.51" fill="#4185cd"/><rect x="606.60" y="411.70" width="1.60" height="0.70" fill="#4185cd"/><rect x="611.90" y="368.32" width="1.60" height="44.08" fill="#4185cd"/><text transform="translate(360.84,416.70) rotate(-90)" font-size="6.00" fill="#454545" stroke="#454545" stroke-width="0.07" text-anchor="end" textLength="34.31" lengthAdjust="spacingAndGlyphs">Aaron Painter</text><text transform="translate(370.59,416.70) rotate(-90)" font-size="6.00" fill="#454545" stroke="#454545" stroke-width="0.07" text-anchor="end" textLength="26.81" lengthAdjust="spacingAndGlyphs">Adam Barr</text><text transform="translate(380.33,416.70) rotate(-90)" font-size="6.00" fill="#454545" stroke="#454545" stroke-width="0.07" text-anchor="end" textLength="18.40" lengthAdjust="spacingAndGlyphs">Analyst</text><text transform="translate(390.08,416.70) rotate(-90)" font-size="6.00" fill="#454545" stroke="#454545" stroke-width="0.07" text-anchor="end" textLength="44.90" lengthAdjust="spacingAndGlyphs">Creative Designer</text><text transform="translate(399.82,416.70) rotate(-90)" font-size="6.00" fill="#454545" stroke="#454545" stroke-width="0.07" text-anchor="end" textLength="40.85" lengthAdjust="spacingAndGlyphs">David Alexander</text><text transform="translate(409.56,416.70) rotate(-90)" font-size="6.00" fill="#454545" stroke="#454545" stroke-width="0.07" text-anchor="end" textLength="30.24" lengthAdjust="spacingAndGlyphs">Dimple Arya</text><text transform="translate(419.31,416.70) rotate(-90)" font-size="6.00" fill="#454545" stroke="#454545" stroke-width="0.07" text-anchor="end" textLength="24.32" lengthAdjust="spacingAndGlyphs">Executive</text><text transform="translate(429.06,416.70) rotate(-90)" font-size="6.00" fill="#454545" stroke="#454545" stroke-width="0.07" text-anchor="end" textLength="25.57" lengthAdjust="spacingAndGlyphs">Glen John</text><text transform="translate(438.80,416.70) rotate(-90)" font-size="6.00" fill="#454545" stroke="#454545" stroke-width="0.07" text-anchor="end" textLength="46.77" lengthAdjust="spacingAndGlyphs">Investment Banker</text><text transform="translate(448.55,416.70) rotate(-90)" font-size="6.00" fill="#454545" stroke="#454545" stroke-width="0.07" text-anchor="end" textLength="24.95" lengthAdjust="spacingAndGlyphs">Jan Kotas</text><text transform="translate(458.29,416.70) rotate(-90)" font-size="6.00" fill="#454545" stroke="#454545" stroke-width="0.07" text-anchor="end" textLength="37.74" lengthAdjust="spacingAndGlyphs">Legal Assistant</text><text transform="translate(468.04,412.80) rotate(-90)" font-size="6.00" fill="#454545" stroke="#454545" stroke-width="0.07" text-anchor="end" textLength="40.23" lengthAdjust="spacingAndGlyphs">Manufacturing...</text><text transform="translate(477.78,416.70) rotate(-90)" font-size="6.00" fill="#454545" stroke="#454545" stroke-width="0.07" text-anchor="end" textLength="48.33" lengthAdjust="spacingAndGlyphs">Marketing Manager</text><text transform="translate(487.53,416.70) rotate(-90)" font-size="6.00" fill="#454545" stroke="#454545" stroke-width="0.07" text-anchor="end" textLength="38.35" lengthAdjust="spacingAndGlyphs">Molly Dempsey</text><text transform="translate(497.27,416.70) rotate(-90)" font-size="6.00" fill="#454545" stroke="#454545" stroke-width="0.07" text-anchor="end" textLength="34.61" lengthAdjust="spacingAndGlyphs">Patrick Sands</text><text transform="translate(507.02,416.70) rotate(-90)" font-size="6.00" fill="#454545" stroke="#454545" stroke-width="0.07" text-anchor="end" textLength="33.99" lengthAdjust="spacingAndGlyphs">Pavel Bansky</text><text transform="translate(516.76,416.70) rotate(-90)" font-size="6.00" fill="#454545" stroke="#454545" stroke-width="0.07" text-anchor="end" textLength="12.78" lengthAdjust="spacingAndGlyphs">PMO</text><text transform="translate(526.50,416.70) rotate(-90)" font-size="6.00" fill="#454545" stroke="#454545" stroke-width="0.07" text-anchor="end" textLength="43.35" lengthAdjust="spacingAndGlyphs">Product Engineer</text><text transform="translate(536.25,416.70) rotate(-90)" font-size="6.00" fill="#454545" stroke="#454545" stroke-width="0.07" text-anchor="end" textLength="25.88" lengthAdjust="spacingAndGlyphs">Ray Chow</text><text transform="translate(545.99,416.70) rotate(-90)" font-size="6.00" fill="#454545" stroke="#454545" stroke-width="0.07" text-anchor="end" textLength="33.99" lengthAdjust="spacingAndGlyphs">Robin Counts</text><text transform="translate(555.74,416.70) rotate(-90)" font-size="6.00" fill="#454545" stroke="#454545" stroke-width="0.07" text-anchor="end" textLength="39.61" lengthAdjust="spacingAndGlyphs">Safety Manager</text><text transform="translate(565.48,416.70) rotate(-90)" font-size="6.00" fill="#454545" stroke="#454545" stroke-width="0.07" text-anchor="end" textLength="39.61" lengthAdjust="spacingAndGlyphs">Sandeep Katyal</text><text transform="translate(575.23,416.70) rotate(-90)" font-size="6.00" fill="#454545" stroke="#454545" stroke-width="0.07" text-anchor="end" textLength="47.08" lengthAdjust="spacingAndGlyphs">Shammi Mohamed</text><text transform="translate(584.97,416.70) rotate(-90)" font-size="6.00" fill="#454545" stroke="#454545" stroke-width="0.07" text-anchor="end" textLength="37.74" lengthAdjust="spacingAndGlyphs">Shaun Beasley</text><text transform="translate(594.72,416.70) rotate(-90)" font-size="6.00" fill="#454545" stroke="#454545" stroke-width="0.07" text-anchor="end" textLength="20.90" lengthAdjust="spacingAndGlyphs">Sponsor</text><text transform="translate(604.46,416.70) rotate(-90)" font-size="6.00" fill="#454545" stroke="#454545" stroke-width="0.07" text-anchor="end" textLength="31.80" lengthAdjust="spacingAndGlyphs">Tom Perham</text><text transform="translate(614.21,412.80) rotate(-90)" font-size="6.00" fill="#454545" stroke="#454545" stroke-width="0.07" text-anchor="end" textLength="34.30" lengthAdjust="spacingAndGlyphs">Unassigned...</text><text transform="translate(623.95,416.70) rotate(-90)" font-size="6.00" fill="#454545" stroke="#454545" stroke-width="0.07" text-anchor="end" textLength="43.96" lengthAdjust="spacingAndGlyphs">Yukari Kemmotsu</text><rect x="477.70" y="473.40" width="3.4" height="3.2" fill="#4185cd"/><text x="482.00" y="476.90" font-size="6.40" fill="#595959" textLength="13.60" lengthAdjust="spacingAndGlyphs">Total</text></svg>
<div class="b" style="left:874.00px;top:79.40px;width:9.40px;height:420.40px;background:#e9e9e9;"></div>
<div class="b" style="left:874.30px;top:96.00px;width:9.00px;height:178.00px;background:#fff;border:0.7px solid #cdcdcd;border-radius:0.8px;"></div>
<svg width="888" height="540" viewBox="0 0 888 540"><path d="M876 91.4L878.6 88.8L881.2 91.4" fill="none" stroke="#555" stroke-width="1.2"/><path d="M876 479.4L878.6 482L881.2 479.4" fill="none" stroke="#555" stroke-width="1.2"/></svg>
<div class="b" style="left:24.80px;top:489.30px;width:849.20px;height:2.40px;background:#fff;"></div>
<div class="b" style="left:4.60px;top:491.60px;width:20.40px;height:8.00px;background:#fff;"></div>
<div class="b" style="left:25.00px;top:491.60px;width:849.00px;height:8.00px;background:#e6e6e6;"></div>
<div class="b" style="left:43.40px;top:492.00px;width:257.00px;height:7.40px;background:#fff;border:0.7px solid #cfcfcf;"></div>
<svg width="888" height="540" viewBox="0 0 888 540"><path d="M38.2 493L35.6 495.6L38.2 498.2" fill="none" stroke="#444" stroke-width="1.2"/><path d="M860.8 493L863.4 495.6L860.8 498.2" fill="none" stroke="#444" stroke-width="1.2"/></svg>
<div class="b" style="left:4.60px;top:499.60px;width:878.80px;height:12.40px;background:#f5f5f5;"></div>
<div class="b" style="left:4.60px;top:512.00px;width:878.80px;height:1.40px;background:#fff;"></div>
<div class="b" style="left:79.50px;top:500.40px;width:111.30px;height:11.60px;background:#fff;border:0.7px solid #c6c6c6;border-bottom:1.4px solid #217346;"></div>
<span class="t" style="left:91.20px;top:502.22px;font-size:7.30px;line-height:8.76px;color:#217346;font-weight:bold;transform:scaleX(1.0065);">OData - Project Overview</span>
<svg width="888" height="540" viewBox="0 0 888 540" fill="#5a5a5a"><rect x="9.7" y="504.2" width="0.9" height="4"/><path d="M13.9 504.1V508.3L11 506.2Z"/><path d="M28.1 504.1V508.3L25.1 506.2Z"/><path d="M40.2 504.1V508.3L43.2 506.2Z"/><path d="M54.5 504.1V508.3L57.4 506.2Z"/><rect x="57.6" y="504.2" width="0.9" height="4"/></svg>
<div class="b" style="left:4.60px;top:513.30px;width:878.80px;height:11.00px;background:#217346;"></div>
<div class="b" style="left:4.60px;top:524.30px;width:878.80px;height:11.80px;background:linear-gradient(180deg,#fff 0,#f0f0f0 8%,#f0f0f0 100%);"></div>
<svg width="888" height="540" viewBox="0 0 888 540"><circle cx="837" cy="529.6" r="2.2" fill="#9cc6f2" stroke="#3b78c4" stroke-width="0.9"/><path d="M838.7 531.4L840.6 533.2" stroke="#7a4a2a" stroke-width="1.2"/><path d="M866.9 529.5H871L868.95 531.6Z" fill="#222"/><path d="M881.6 531.4L882.4 530.6M879.6 533.4L882.4 530.6M881.6 533.4L882.4 532.6" stroke="#c4c4c4" stroke-width="0.7"/></svg>
<span class="t" style="left:842.80px;top:526.38px;font-size:6.70px;line-height:8.04px;color:#222;transform:scaleX(0.8987);">100%</span>
</body></html>
